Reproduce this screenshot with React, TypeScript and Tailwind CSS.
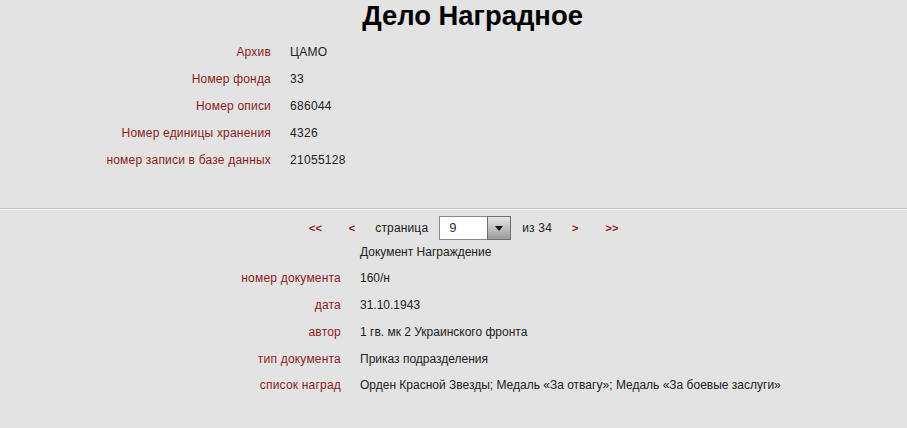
import React from "react";

const top = [
  ["Архив", "ЦАМО"],
  ["Номер фонда", "33"],
  ["Номер описи", "686044"],
  ["Номер единицы хранения", "4326"],
  ["номер записи в базе данных", "21055128"],
];

const bottom = [
  ["номер документа", "160/н"],
  ["дата", "31.10.1943"],
  ["автор", "1 гв. мк 2 Украинского фронта"],
  ["тип документа", "Приказ подразделения"],
  ["список наград", "Орден Красной Звезды; Медаль «За отвагу»; Медаль «За боевые заслуги»"],
];

export default function App() {
  return (
    <div
      className="w-[907px] h-[428px] bg-[#e3e3e3] text-[12px] text-[#222] overflow-hidden"
      style={{ fontFamily: '"Liberation Sans", Arial, sans-serif' }}
    >
      <div className="pt-[1px] h-[38px] text-center">
        <h1 className="text-[27.4px] leading-[30px] font-bold text-black pl-[38px]">Дело Наградное</h1>
      </div>
      <div className="flex flex-col">
        {top.map(([l, v]) => (
          <div key={l} className="flex h-[27px] items-center">
            <div className="w-[271px] text-right text-[#8b1c1c] tracking-[0.2px]">{l}</div>
            <div className="ml-[19px] tracking-[0.3px]">{v}</div>
          </div>
        ))}
      </div>
      <div className="mt-[35px] border-t border-[#c6c9c6] border-b border-b-[#f2f2f2]" />
      <div className="flex items-center h-[24px] mt-[6px] pl-[309px]">
        <span className="font-bold text-[11px] text-[#8b1c1c]">&lt;&lt;</span>
        <span className="ml-[27px] font-bold text-[11px] text-[#8b1c1c]">&lt;</span>
        <span className="ml-[20px] tracking-[0.15px]">страница</span>
        <div className="ml-[11px] flex h-[24px]">
          <div className="w-[48px] bg-white border border-[#8a8a8a] border-r-0 flex items-center pl-[9px] text-[13px] text-[#1d3340]">
            9
          </div>
          <div className="w-[24px] border border-[#6e6e6e] bg-gradient-to-b from-[#e6e6e6] to-[#9c9c9c] flex items-center justify-center">
            <svg width="8" height="5" viewBox="0 0 8 5">
              <path d="M0 0h8L4 5z" fill="#111" />
            </svg>
          </div>
        </div>
        <span className="ml-[11px] tracking-[0.2px]">из 34</span>
        <span className="ml-[20px] font-bold text-[11px] text-[#8b1c1c]">&gt;</span>
        <span className="ml-[27px] font-bold text-[11px] text-[#8b1c1c]">&gt;&gt;</span>
      </div>
      <div className="flex h-[24px] items-center">
        <div className="w-[341px]" />
        <div className="ml-[19px]">Документ Награждение</div>
      </div>
      <div className="flex flex-col mt-[1px]">
        {bottom.map(([l, v]) => (
          <div key={l} className="flex h-[26.75px] items-center">
            <div className="w-[341px] text-right text-[#8b1c1c] tracking-[0.2px]">{l}</div>
            <div className="ml-[19px]">{v}</div>
          </div>
        ))}
      </div>
    </div>
  );
}
